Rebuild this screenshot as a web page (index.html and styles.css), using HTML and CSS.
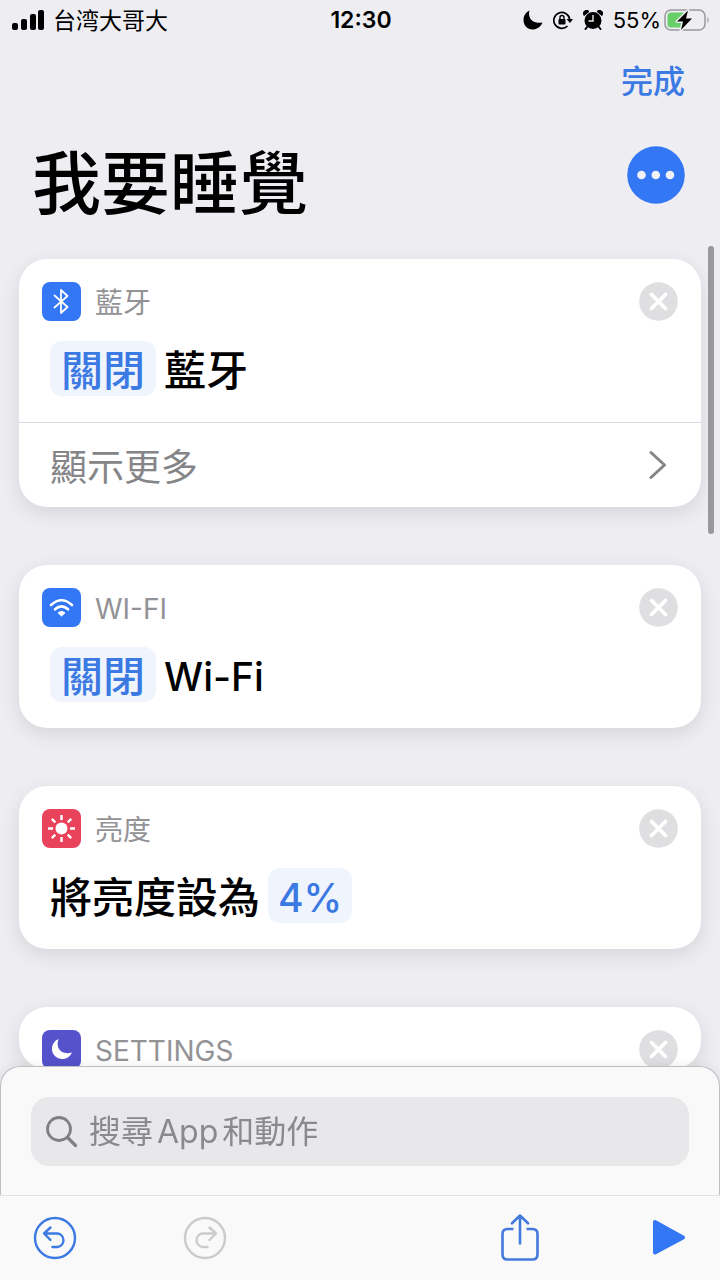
FILE: index.html
```html
<!DOCTYPE html>
<html lang="zh-Hant">
<head>
<meta charset="utf-8">
<meta name="viewport" content="width=device-width, initial-scale=1">
<title>我要睡覺</title>
<link rel="stylesheet" href="styles.css">
</head>
<body>
<div class="app">
  <div class="status">
    <div class="status-side">
      <svg class="signal" width="33" height="20" viewBox="0 0 33 20" aria-hidden="true"><rect x="0" y="13" width="6" height="7" rx="2"/><rect x="9" y="9" width="6" height="11" rx="2"/><rect x="18" y="4" width="6" height="16" rx="2"/><rect x="26" y="0" width="6" height="20" rx="2"/></svg>
      <span class="carrier">台湾大哥大</span>
    </div>
    <span class="clock">12:30</span>
    <div class="status-side status-right">
      <svg width="20" height="20" viewBox="0 0 20 20" aria-hidden="true"><path d="M6.500 0.500C4.500 7.500 9 14.500 19.500 12.500C17 18 12.500 19.500 9.500 19.500C4.500 19.500 0.500 15.500 0.500 10C0.500 5.500 3 2 6.500 0.500Z"/></svg>
      <svg width="20" height="20" viewBox="0 0 20 20" aria-hidden="true"><path d="M14.500 16A8 8 0 1 1 16.700 9" fill="none" stroke="#000" stroke-width="1.700"/><path d="M13.500 9H20L17 13Z"/><rect x="5.500" y="9" width="7" height="5.500" rx="1"/><path d="M7 9.500V7.500A2 2 0 0 1 11 7.500V9.500" fill="none" stroke="#000" stroke-width="1.400"/></svg>
      <svg width="20" height="20" viewBox="0 0 20 20" aria-hidden="true"><circle cx="10" cy="10.500" r="8.500"/><path d="M1 5.500A3 3 0 0 1 6 1.500ZM19 5.500A3 3 0 0 0 14 1.500Z" stroke="#000" stroke-linejoin="round"/><path d="M4.500 16.500L2.500 19M15.500 16.500L17.500 19" stroke="#000" stroke-width="2" stroke-linecap="round"/><path d="M10 5V11H5.500" fill="none" stroke="#eeedf2" stroke-width="1.400"/></svg>
      <span class="percent">55%</span>
      <svg width="46" height="23" viewBox="0 0 46 23" aria-hidden="true"><rect x="1" y="1" width="40" height="20" rx="6" fill="none" stroke="#98989d" stroke-width="1.500"/><rect x="3.500" y="3.500" width="19" height="15" rx="3.500" fill="#68ce67"/><path d="M43.500 7.500Q46 11 43.500 14.500Z" fill="#98989d"/><path d="M24 1.500L13 12.500H19L17 21L28 9.500H22Z" stroke="#eeedf2" stroke-width="3" stroke-linejoin="round"/><path d="M24 1.500L13 12.500H19L17 21L28 9.500H22Z"/></svg>
    </div>
  </div>

  <header class="header">
    <button class="done" type="button">完成</button>
    <div class="title-row">
      <h1 class="title">我要睡覺</h1>
      <button class="more" type="button" aria-label="更多"><svg width="58" height="58" viewBox="0 0 58 58"><circle cx="29" cy="29" r="28.800" fill="#3377f5"/><g fill="#f1f2f8"><circle cx="14.500" cy="29" r="4.300"/><circle cx="28.800" cy="29" r="4.300"/><circle cx="43" cy="29" r="4.300"/></g></svg></button>
    </div>
  </header>

  <main class="actions">
    <section class="card">
      <div class="card-head">
        <svg class="tile tile-blue" viewBox="0 0 39 39" aria-hidden="true"><path d="M12.500 13.500L25.500 25L19 31V8L25.500 14L12.500 25.500" fill="none" stroke="#fff" stroke-width="1.800" stroke-linejoin="round" stroke-linecap="round"/></svg>
        <h2 class="label">藍牙</h2>
        <button class="remove" type="button" aria-label="移除"><svg width="39" height="39" viewBox="0 0 39 39"><circle cx="19.500" cy="19.500" r="19.300" fill="#dfdfe1"/><path d="M12.500 12.500L26.500 26.500M26.500 12.500L12.500 26.500" stroke="#fff" stroke-width="3.800" stroke-linecap="round"/></svg></button>
      </div>
      <div class="phrase"><button class="chip" type="button">關閉</button><span class="words">藍牙</span></div>
      <button class="show-more" type="button"><span>顯示更多</span><svg width="18" height="30" viewBox="0 0 18 30" aria-hidden="true"><path d="M2 2.500L15.500 15L2 27.500" fill="none" stroke="#858588" stroke-width="3" stroke-linecap="round" stroke-linejoin="round"/></svg></button>
    </section>

    <section class="card">
      <div class="card-head">
        <svg class="tile tile-blue" viewBox="0 0 39 39" aria-hidden="true"><g fill="none" stroke="#fff" stroke-width="2.600" stroke-linecap="round"><path d="M9 17Q19.500 7.500 30 17"/><path d="M13 21.300Q19.500 15.500 26 21.300"/></g><path d="M16 24.800Q19.500 21.800 23 24.800L19.500 28Z" fill="#fff" stroke="#fff" stroke-linejoin="round"/></svg>
        <h2 class="label">WI-FI</h2>
        <button class="remove" type="button" aria-label="移除"><svg width="39" height="39" viewBox="0 0 39 39"><circle cx="19.500" cy="19.500" r="19.300" fill="#dfdfe1"/><path d="M12.500 12.500L26.500 26.500M26.500 12.500L12.500 26.500" stroke="#fff" stroke-width="3.800" stroke-linecap="round"/></svg></button>
      </div>
      <div class="phrase"><button class="chip" type="button">關閉</button><span class="words latin">Wi-Fi</span></div>
    </section>

    <section class="card">
      <div class="card-head">
        <svg class="tile tile-red" viewBox="0 0 39 39" aria-hidden="true"><circle cx="19.500" cy="19.500" r="6" fill="#fff"/><path d="M19.500 6V11M19.500 28V33M6 19.500H11M28 19.500H33M9.800 9.800L13.300 13.300M25.700 25.700L29.200 29.200M29.200 9.800L25.700 13.300M13.300 25.700L9.800 29.200" stroke="#fff" stroke-width="2.400"/></svg>
        <h2 class="label">亮度</h2>
        <button class="remove" type="button" aria-label="移除"><svg width="39" height="39" viewBox="0 0 39 39"><circle cx="19.500" cy="19.500" r="19.300" fill="#dfdfe1"/><path d="M12.500 12.500L26.500 26.500M26.500 12.500L12.500 26.500" stroke="#fff" stroke-width="3.800" stroke-linecap="round"/></svg></button>
      </div>
      <div class="phrase"><span class="words">將亮度設為</span><button class="chip chip-number latin" type="button">4%</button></div>
    </section>

    <section class="card">
      <div class="card-head">
        <svg class="tile tile-indigo" viewBox="0 0 39 39" aria-hidden="true"><path d="M16.500 9C13.500 17.500 18.500 25.500 30 22.500C28 27 24 29 20.500 29C14.500 29 10 24.500 10 19C10 14.500 12.500 10.500 16.500 9Z" fill="#fff"/></svg>
        <h2 class="label">SETTINGS</h2>
        <button class="remove" type="button" aria-label="移除"><svg width="39" height="39" viewBox="0 0 39 39"><circle cx="19.500" cy="19.500" r="19.300" fill="#dfdfe1"/><path d="M12.500 12.500L26.500 26.500M26.500 12.500L12.500 26.500" stroke="#fff" stroke-width="3.800" stroke-linecap="round"/></svg></button>
      </div>
    </section>
  </main>

  <div class="scrollbar"></div>

  <footer class="dock">
    <div class="sheet">
      <label class="search">
        <svg width="32" height="32" viewBox="0 0 32 32" aria-hidden="true"><circle cx="13" cy="13" r="11.500" fill="none" stroke="#808084" stroke-width="2.800"/><path d="M21.500 21.500L29.500 29.500" stroke="#808084" stroke-width="3.200" stroke-linecap="round"/></svg>
        <input class="search-input" type="search" placeholder="搜尋App和動作" aria-label="搜尋App和動作">
      </label>
    </div>
    <nav class="toolbar">
      <div class="tools">
        <button class="tool" type="button" aria-label="復原"><svg width="44" height="44" viewBox="0 0 44 44" fill="none" stroke="#3b79e3" stroke-width="2.400" stroke-linecap="round" stroke-linejoin="round"><circle cx="22" cy="22" r="20"/><path d="M17.500 11.500L11 17.500L17.500 24M11.500 17.500H24.500A6.800 6.800 0 0 1 24.500 31H19.500"/></svg></button>
        <button class="tool" type="button" aria-label="重做" disabled><svg width="44" height="44" viewBox="0 0 44 44" fill="none" stroke="#cbcbcd" stroke-width="2.400" stroke-linecap="round" stroke-linejoin="round"><circle cx="22" cy="22" r="20"/><path d="M26.500 11.500L33 17.500L26.500 24M32.500 17.500H19.500A6.800 6.800 0 0 0 19.500 31H24.500"/></svg></button>
      </div>
      <div class="tools tools-right">
        <button class="tool" type="button" aria-label="分享"><svg width="38" height="48" viewBox="0 0 38 48" fill="none" stroke="#4179dc" stroke-width="2.600" stroke-linecap="round" stroke-linejoin="round"><path d="M12.500 15H6.500Q1.500 15 1.500 20V40.500Q1.500 45.500 6.500 45.500H31.500Q36.500 45.500 36.500 40.500V20Q36.500 15 31.500 15H25.500" stroke-linecap="butt"/><path d="M19 29.500V1.500M11 9.300L19 1.500L27 9.300"/></svg></button>
        <button class="tool" type="button" aria-label="執行"><svg width="34" height="38" viewBox="0 0 34 38"><path d="M3 3V33.500L31 18.500Z" fill="#3377f5" stroke="#3377f5" stroke-width="4" stroke-linejoin="round"/></svg></button>
      </div>
    </nav>
  </footer>
</div>
</body>
</html>
```
FILE: styles.css
```css
* {
  box-sizing: border-box;
}

body {
  margin: 0;
  background: #eeedf2;
  color: #000;
  font-family: Inter, "Noto Sans CJK TC", sans-serif;
}

button {
  margin: 0;
  padding: 0;
  border: 0;
  background: none;
  color: inherit;
  font: inherit;
  cursor: pointer;
}

svg {
  display: block;
  flex: none;
}

h1,
h2 {
  margin: 0;
}

.app {
  height: 100vh;
  overflow: hidden;
}

.status {
  display: grid;
  grid-template-columns: 1fr auto 1fr;
  align-items: center;
  height: 40px;
  padding: 0 10px 0 12px;
}

.status-side {
  display: flex;
  align-items: center;
  gap: 8px;
}

.status-right {
  justify-content: flex-end;
  gap: 10px;
}

.carrier {
  padding-top: 2px;
  font-size: 23px;
  line-height: 30px;
}

.clock {
  font-size: 23px;
  font-weight: 600;
}

.percent {
  margin-right: -7px;
  font-size: 22px;
}

.header {
  display: flex;
  flex-direction: column;
  gap: 38px;
  padding: 17px 35px 0 32px;
}

.done {
  align-self: flex-end;
  color: #3b79e3;
  font-size: 32px;
  font-weight: 500;
  line-height: 50px;
}

.title-row {
  display: flex;
  align-items: center;
  justify-content: space-between;
  height: 60px;
}

.title {
  padding-top: 18px;
  font-size: 69px;
  font-weight: 500;
  line-height: 80px;
}

.actions {
  display: flex;
  flex-direction: column;
  gap: 58px;
  padding: 54px 19px 0;
}

.card {
  padding-top: 23px;
  border-radius: 28px;
  background: #fff;
  box-shadow: 0 6px 20px rgba(0, 0, 0, 0.1);
}

.card-head {
  display: flex;
  align-items: center;
  gap: 14px;
  height: 39px;
  padding: 0 23px;
}

.tile {
  width: 39px;
  height: 39px;
  border-radius: 8px;
}

.tile-blue {
  background: #3377f5;
}

.tile-red {
  background: #e9425b;
}

.tile-indigo {
  background: #5552cb;
}

.label {
  flex: 1;
  padding-top: 3px;
  color: #939396;
  font-size: 28px;
  font-weight: 400;
  line-height: 36px;
}

.remove {
  border-radius: 50%;
}

.phrase {
  display: flex;
  align-items: center;
  gap: 8px;
  padding: 20px 31px 26px;
  font-size: 42px;
  font-weight: 500;
  line-height: 51px;
}

.chip {
  padding: 4px 11px 0;
  border-radius: 12px;
  background: #eff4fd;
  color: #3b79e3;
}

.chip-number {
  padding: 4px 10px 0;
}

.words {
  padding-top: 4px;
}

.latin {
  font-size: 39px;
}

.show-more {
  display: flex;
  align-items: center;
  justify-content: space-between;
  width: 100%;
  height: 85px;
  padding: 0 34px 0 31px;
  border-top: 1px solid #dcdcde;
  color: #858588;
  font-size: 37px;
}

.scrollbar {
  position: fixed;
  top: 246px;
  right: 6px;
  width: 6px;
  height: 288px;
  border-radius: 3px;
  background: #98989d;
}

.dock {
  position: fixed;
  right: 0;
  bottom: 0;
  left: 0;
}

.sheet {
  padding: 30px 30px 29px;
  border: 1px solid #bfbfc3;
  border-bottom: 0;
  border-radius: 20px 20px 0 0;
  background: #f9f9f9;
  box-shadow: 0 0 12px rgba(0, 0, 0, 0.08);
}

.search {
  display: flex;
  align-items: center;
  gap: 11px;
  height: 69px;
  padding: 0 15px;
  border-radius: 18px;
  background: #e8e8ea;
}

.search-input {
  flex: 1;
  min-width: 0;
  padding: 0;
  border: 0;
  outline: 0;
  background: none;
  color: #000;
  font: inherit;
  font-size: 32px;
  text-autospace: normal;
}

.search-input::placeholder {
  color: #8a8a8e;
  opacity: 1;
}

.toolbar {
  display: flex;
  align-items: center;
  justify-content: space-between;
  height: 85px;
  padding: 0 34px 0 33px;
  border-top: 1px solid #e2e2e4;
  background: #f9f9f9;
}

.tools {
  display: flex;
  align-items: center;
  gap: 106px;
}

.tools-right {
  gap: 113px;
}
```
